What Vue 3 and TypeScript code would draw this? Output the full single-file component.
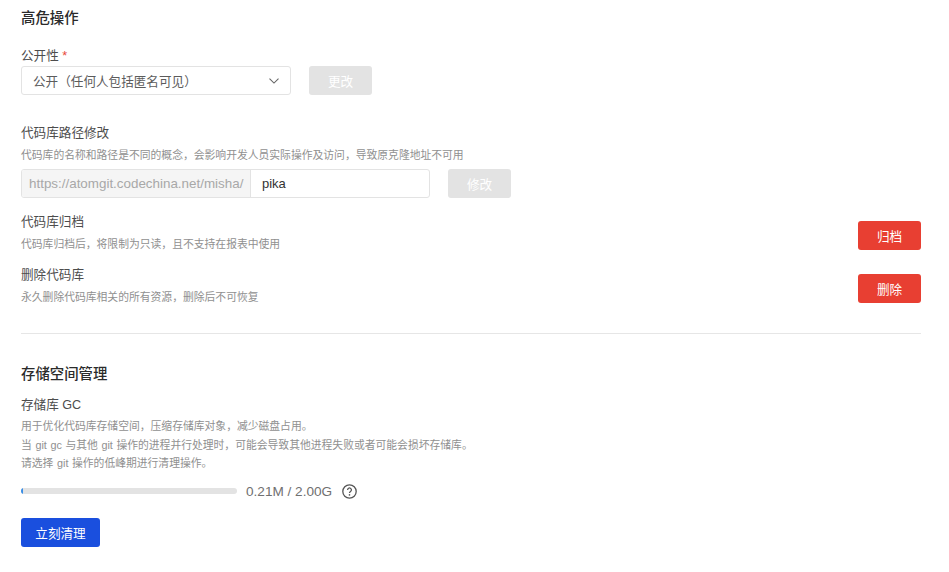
<script setup lang="ts">
const gcLines: string[] = [
  '用于优化代码库存储空间，压缩存储库对象，减少磁盘占用。',
  '当 git gc 与其他 git 操作的进程并行处理时，可能会导致其他进程失败或者可能会损坏存储库。',
  '请选择 git 操作的低峰期进行清理操作。',
]
</script>

<template>
  <div class="page">
    <h2 class="title first">高危操作</h2>

    <div class="label vis-label">公开性 <span class="req">*</span></div>
    <div class="row vis-row">
      <div class="select">
        <span>公开（任何人包括匿名可见）</span>
        <svg class="chev" width="10" height="6" viewBox="0 0 10 6" fill="none">
          <path d="M.5.7L5 5.1 9.5.7" stroke="#666" stroke-width="1.1" />
        </svg>
      </div>
      <button class="btn disabled">更改</button>
    </div>

    <div class="label path-label">代码库路径修改</div>
    <div class="desc path-desc">代码库的名称和路径是不同的概念，会影响开发人员实际操作及访问，导致原克隆地址不可用</div>
    <div class="row path-row">
      <div class="group">
        <div class="prefix">https://atomgit.codechina.net/misha/</div>
        <div class="value">pika</div>
      </div>
      <button class="btn disabled">修改</button>
    </div>

    <div class="action archive">
      <div>
        <div class="label">代码库归档</div>
        <div class="desc action-desc">代码库归档后，将限制为只读，且不支持在报表中使用</div>
      </div>
      <button class="btn danger">归档</button>
    </div>
    <div class="action remove">
      <div>
        <div class="label">删除代码库</div>
        <div class="desc action-desc">永久删除代码库相关的所有资源，删除后不可恢复</div>
      </div>
      <button class="btn danger">删除</button>
    </div>

    <div class="divider"></div>

    <h2 class="title storage">存储空间管理</h2>
    <div class="label gc-label">存储库 GC</div>
    <div class="gc-desc">
      <div v-for="line in gcLines" :key="line" class="desc gc-line">{{ line }}</div>
    </div>
    <div class="usage">
      <div class="track"><div class="fill"></div></div>
      <span class="usage-text">0.21M / 2.00G</span>
      <svg class="help" width="15" height="15" viewBox="0 0 15 15" fill="none">
        <circle cx="7.5" cy="7.5" r="6.7" stroke="#555" stroke-width="1.3" />
        <path d="M5.6 5.9a1.9 1.9 0 1 1 2.9 1.6c-.6.4-1 .7-1 1.4" stroke="#555" stroke-width="1.3" />
        <circle cx="7.5" cy="10.9" r=".8" fill="#555" />
      </svg>
    </div>
    <button class="btn primary">立刻清理</button>
  </div>
</template>

<style>
html, body { margin: 0; background: #fff; }
</style>

<style scoped>
.page {
  width: 921px;
  height: 572px;
  box-sizing: border-box;
  padding-left: 21px;
  overflow: hidden;
  font-family: "Liberation Sans", "Noto Sans CJK SC", sans-serif;
  color: #333;
}
.title {
  margin: 0;
  font-size: 14.4px;
  line-height: 20px;
  font-weight: 500;
  color: #2b2b2b;
}
.first { margin-top: 8px; }
.storage { margin-top: 30px; }
.label {
  font-size: 12.6px;
  line-height: 18px;
  color: #4d4d4d;
}
.vis-label { margin-top: 19px; }
.req { color: #e8483a; }
.desc {
  font-size: 10.8px;
  line-height: 18px;
  color: #909090;
}
.row { display: flex; gap: 18px; }
.vis-row { margin-top: 1px; }
.path-row { margin-top: 5px; }
.select {
  width: 270px;
  height: 29px;
  box-sizing: border-box;
  border: 1px solid #e3e3e3;
  border-radius: 3px;
  padding: 0 11px;
  display: flex;
  align-items: center;
  justify-content: space-between;
  font-size: 12.6px;
  color: #5c5c5c;
}
.btn {
  width: 63px;
  height: 29px;
  border: 0;
  border-radius: 3px;
  padding: 0;
  font-family: inherit;
  font-size: 12.6px;
  color: #fff;
  flex: none;
}
.disabled { background: #e3e3e3; }
.danger { background: #e83f32; margin-top: 8px; }
.primary { display: block; width: 79px; margin-top: 18px; background: #1a4fde; }
.path-label { margin-top: 29px; }
.path-desc { margin-top: 4px; }
.group {
  width: 409px;
  height: 29px;
  box-sizing: border-box;
  display: flex;
  border: 1px solid #e3e3e3;
  border-radius: 3px;
  overflow: hidden;
}
.prefix {
  width: 229px;
  box-sizing: border-box;
  padding-left: 7px;
  background: #f5f5f5;
  border-right: 1px solid #e3e3e3;
  font-size: 13.4px;
  line-height: 27px;
  color: #a8a8a8;
  white-space: nowrap;
}
.value {
  padding-left: 11px;
  font-size: 13px;
  line-height: 27px;
  color: #333;
}
.action {
  display: flex;
  align-items: flex-start;
  justify-content: space-between;
}
.action-desc { margin-top: 4px; }
.archive { margin-top: 15px; }
.remove { margin-top: 13px; }
.divider {
  height: 1px;
  background: #e6e6e6;
  margin-top: 27px;
}
.gc-label { margin-top: 12px; }
.gc-desc { margin-top: 3px; }
.gc-line { line-height: 18.5px; word-spacing: 0.6px; }
.usage {
  display: flex;
  align-items: center;
  margin-top: 9.5px;
  height: 18px;
}
.track {
  width: 216px;
  height: 6px;
  border-radius: 3px;
  background: #e3e3e3;
  overflow: hidden;
}
.fill { width: 2px; height: 100%; background: #3a8ee6; }
.usage-text {
  margin-left: 9px;
  font-size: 13.6px;
  color: #707070;
}
.help { margin-left: 10px; }
</style>
